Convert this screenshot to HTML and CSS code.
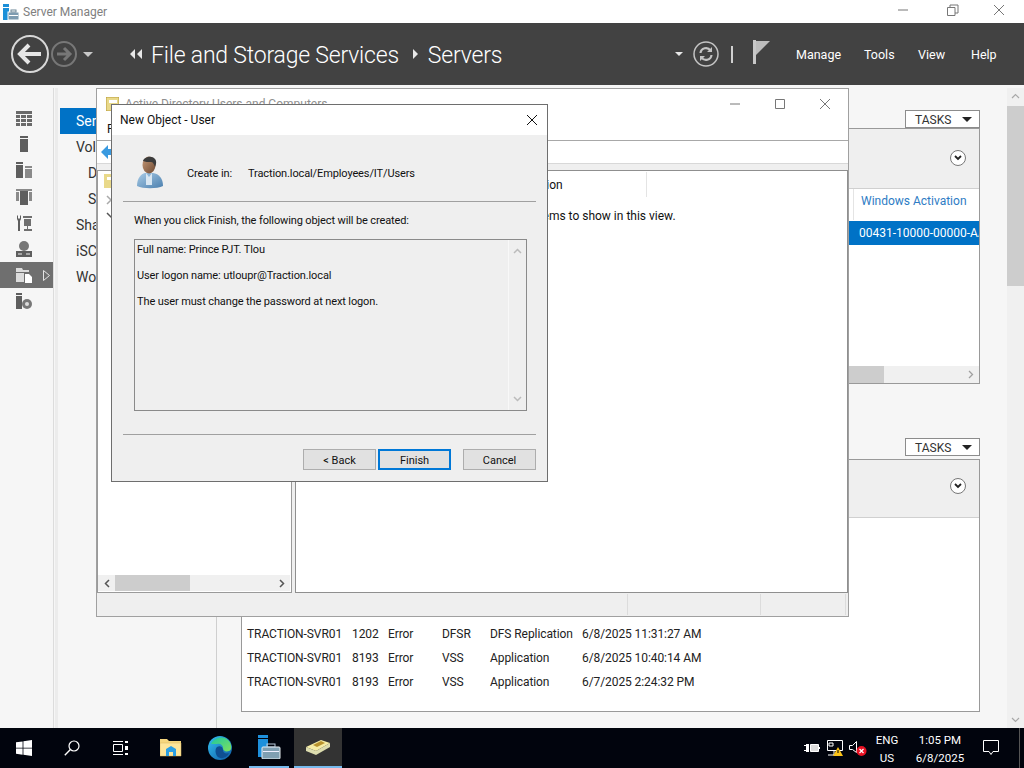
FILE: index.html
```html
<!DOCTYPE html>
<html lang="en">
<head>
    <meta charset="UTF-8">
    <title>Server Manager</title>
    <link rel="stylesheet" href="styles.css">
</head>
<body>

    <div class="app-title">
        <svg class="app-icon" width="16" height="16" viewBox="0 0 16 16">
            <rect x="0" y="0" width="6" height="3" fill="#1b8fd8"/>
            <rect x="0" y="4" width="6" height="12" fill="#1b8fd8"/>
            <rect x="5" y="8" width="11" height="8" fill="#7d9bb0" stroke="#fff" stroke-width="1"/>
            <rect x="8" y="6" width="5" height="2" fill="none" stroke="#6b8596"/>
            <rect x="6" y="11" width="9" height="1" fill="#fff"/>
        </svg>
        <span class="app-name">Server Manager</span>
        <div class="win-buttons">
            <svg class="win-btn-min" width="12" height="12" viewBox="0 0 12 12"><path d="M1 6h10" stroke="#777" fill="none"/></svg>
            <svg class="win-btn-restore" width="12" height="12" viewBox="0 0 12 12"><path d="M.5 3.500h7.500v8h-7.500zM3 3.500v-2.500h8v8h-3" stroke="#777" fill="none"/></svg>
            <svg class="win-btn-close" width="12" height="12" viewBox="0 0 12 12"><path d="M1 1l10 10M11 1l-10 10" stroke="#777" fill="none"/></svg>
        </div>
    </div>

    <header class="topbar">
        <svg class="nav-back" width="40" height="40" viewBox="0 0 40 40">
            <circle cx="20" cy="20" r="18" fill="none" stroke="#d8d8d8" stroke-width="2"/>
            <path d="M31 20H11M19 11l-9 9 9 9" fill="none" stroke="#e6e6e6" stroke-width="4"/>
        </svg>
        <svg class="nav-forward" width="28" height="28" viewBox="0 0 28 28">
            <circle cx="14" cy="14" r="12" fill="none" stroke="#777" stroke-width="2"/>
            <path d="M7 14h13M14 8l6 6-6 6" fill="none" stroke="#777" stroke-width="3"/>
        </svg>
        <span class="caret nav-caret"></span>
        <div class="crumbs">
            <svg width="12" height="10" viewBox="0 0 12 10"><path d="M5 0v10L0 5zM12 0v10L7 5z" fill="#e8e8e8"/></svg>
            <span class="crumb-first">File and Storage Services</span>
            <svg class="crumb-sep" width="5" height="10" viewBox="0 0 5 10"><path d="M0 0v10l5-5z" fill="#e8e8e8"/></svg>
            <span>Servers</span>
        </div>
        <span class="caret small-caret"></span>
        <svg class="refresh" width="28" height="28" viewBox="0 0 28 28">
            <circle cx="14" cy="14" r="12" fill="none" stroke="#c4c4c4" stroke-width="1.500"/>
            <path d="M8.500 13a5.500 5.500 0 0 1 10-2.500M19.500 15a5.500 5.500 0 0 1-10 2.500" fill="none" stroke="#c4c4c4" stroke-width="2.200"/>
            <path d="M20 7v5h-5zM8 21v-5h5z" fill="#c4c4c4"/>
        </svg>
        <span class="bar-sep"></span>
        <svg class="flag" width="18" height="24" viewBox="0 0 18 24">
            <rect x="0" y="0" width="3" height="24" fill="#c8c8c8"/>
            <path d="M3 1h14L3 15z" fill="#bdbdbd"/>
        </svg>
        <nav class="menu">
            <span class="menu-manage">Manage</span>
            <span class="menu-tools">Tools</span>
            <span class="menu-view">View</span>
            <span>Help</span>
        </nav>
    </header>

    <main class="main">
        <div class="rail">
            <div class="rail-item">
                <svg width="16" height="15" viewBox="0 0 16 15"><path d="M0 0h16v3H0zM0 4h4v3H0zM5 4h5v3H5zM11 4h5v3h-5zM0 8h4v3H0zM5 8h5v3H5zM11 8h5v3h-5zM0 12h4v3H0zM5 12h5v3H5zM11 12h5v3h-5z" fill="#6a6a6a"/></svg>
            </div>
            <div class="rail-item">
                <svg width="8" height="16" viewBox="0 0 8 16"><path d="M0 0h8v2H0zM0 3h8v13H0z" fill="#5e5e5e"/></svg>
            </div>
            <div class="rail-item">
                <svg width="16" height="16" viewBox="0 0 16 16"><path d="M0 0h7v2H0zM0 3h7v13H0z" fill="#5e5e5e"/><path d="M9 4h7v2H9zM9 7h7v9H9z" fill="#8a8a8a"/></svg>
            </div>
            <div class="rail-item">
                <svg width="16" height="16" viewBox="0 0 16 16"><path d="M0 0h16v2H0zM0 3h3v9H0zM13 3h3v9h-3z" fill="#8a8a8a"/><path d="M4 2h8v14H4z" fill="#5e5e5e"/></svg>
            </div>
            <div class="rail-item">
                <svg width="16" height="16" viewBox="0 0 16 16"><path d="M2 0v3l1 1 1-1V0l1 1v3L4 6v10H2V6L1 4V1z" fill="#5e5e5e"/><path d="M7 1h9v2H7zM8 4h7v7H8zM11 11h1v3h-1zM8 14h8v2H8z" fill="#6f6f6f"/></svg>
            </div>
            <div class="rail-item">
                <svg width="16" height="16" viewBox="0 0 16 16"><circle cx="8" cy="5" r="5" fill="#777"/><path d="M0 10h16v6H0z" fill="#5e5e5e"/><path d="M2 12.500h4v1H2zM10 12.500h4v1h-4z" fill="#eee"/></svg>
            </div>
            <div class="rail-item rail-active">
                <svg width="16" height="16" viewBox="0 0 16 16"><path d="M0 1h6l1 2h6v2H0zM0 6h8v9H0z" fill="#dcdcdc"/><path d="M9 7h4l3 3v6H9z" fill="#fff"/></svg>
                <svg class="rail-arrow" width="7" height="11" viewBox="0 0 7 11"><path d="M.5.500v10l6-5z" fill="none" stroke="#e4e4e4"/></svg>
            </div>
            <div class="rail-item">
                <svg width="16" height="16" viewBox="0 0 16 16"><path d="M0 0h6v2H0zM0 3h6v13H0z" fill="#5e5e5e"/><circle cx="11" cy="11" r="5" fill="#777"/><circle cx="11" cy="11" r="2" fill="#ddd"/></svg>
            </div>
        </div>

        <ul class="subnav">
            <li class="subnav-active">Servers</li>
            <li>Volumes</li>
            <li class="subnav-sub">Disks</li>
            <li class="subnav-sub">Storage Pools</li>
            <li>Shares</li>
            <li>iSCSI</li>
            <li>Work Folders</li>
        </ul>

        <div class="content">
            <div class="tasks"><span>TASKS</span><span class="caret tasks-caret"></span></div>
            <section class="panel panel-servers">
                <div class="panel-head">
                    <span class="expand"><svg width="8" height="6" viewBox="0 0 8 6"><path d="M1 1l3 3 3-3" fill="none" stroke="#222" stroke-width="1.800"/></svg></span>
                </div>
                <div class="col-row"><span class="col-name">Windows Activation</span></div>
                <div class="sel-row"><span>00431-10000-00000-AA</span></div>
                <div class="panel-fill"></div>
                <div class="hscroll">
                    <span class="hscroll-thumb"></span>
                    <svg width="6" height="9" viewBox="0 0 6 9"><path d="M1 1l3.500 3.500L1 8" fill="none" stroke="#a0a0a0" stroke-width="1.300"/></svg>
                </div>
            </section>

            <div class="tasks tasks-events"><span>TASKS</span><span class="caret tasks-caret"></span></div>
            <section class="panel panel-events">
                <div class="panel-head panel-head-events">
                    <span class="expand"><svg width="8" height="6" viewBox="0 0 8 6"><path d="M1 1l3 3 3-3" fill="none" stroke="#222" stroke-width="1.800"/></svg></span>
                </div>
                <table class="events">
                    <tr><td>TRACTION-SVR01</td><td>1202</td><td>Error</td><td>DFSR</td><td>DFS Replication</td><td>6/8/2025 11:31:27 AM</td></tr>
                    <tr><td>TRACTION-SVR01</td><td>8193</td><td>Error</td><td>VSS</td><td>Application</td><td>6/8/2025 10:40:14 AM</td></tr>
                    <tr><td>TRACTION-SVR01</td><td>8193</td><td>Error</td><td>VSS</td><td>Application</td><td>6/7/2025 2:24:32 PM</td></tr>
                </table>
            </section>
        </div>

        <div class="vscroll">
            <svg class="vscroll-up" width="9" height="6" viewBox="0 0 9 6"><path d="M1 5l3.500-3.500L8 5" fill="none" stroke="#a8a8a8" stroke-width="1.200"/></svg>
            <span class="vscroll-thumb"></span>
            <svg class="vscroll-down" width="9" height="6" viewBox="0 0 9 6"><path d="M1 1l3.500 3.500L8 1" fill="none" stroke="#a8a8a8" stroke-width="1.200"/></svg>
        </div>
    </main>

    <footer class="taskbar">
        <svg class="task-start" width="16" height="16" viewBox="0 0 16 16"><path d="M0 2.300l6.600-.9v6.300H0zM7.400 1.300L16 0v7.700H7.400zM0 8.400h6.600v6.300L0 13.800zM7.400 8.400H16V16l-8.600-1.200z" fill="#fff"/></svg>
        <svg class="task-search" width="16" height="16" viewBox="0 0 16 16"><circle cx="10" cy="6" r="5" fill="none" stroke="#fff" stroke-width="1.200"/><path d="M6.400 9.600L.8 15.200" stroke="#fff" stroke-width="1.400"/></svg>
        <svg class="task-view" width="16" height="16" viewBox="0 0 16 16"><path d="M1.500 4.500h9v7h-9zM1 1.500h10M1 14.500h10" fill="none" stroke="#fff"/><path d="M13 1h3v2h-3zM13 6h3v4h-3zM13 13h3v2h-3z" fill="#fff"/></svg>
        <svg class="task-explorer" width="22" height="20" viewBox="0 0 22 20">
            <path d="M0 1h7l2 2h12v15H0z" fill="#f5d67e"/>
            <path d="M0 5h21v13H0z" fill="#fde59a" stroke="#d9b75e" stroke-width=".5"/>
            <path d="M6 11l5-3 5 3v7h-3v-4H9v4H6z" fill="#2b9fe3"/>
        </svg>
        <svg class="task-edge" width="24" height="24" viewBox="0 0 24 24">
            <defs>
                <linearGradient id="edgeA" x1="0" y1="0" x2="1" y2="1"><stop offset="0" stop-color="#35c1f1"/><stop offset="1" stop-color="#0c59a4"/></linearGradient>
                <linearGradient id="edgeB" x1="0" y1="0" x2="1" y2="1"><stop offset="0" stop-color="#1dc8a0"/><stop offset="1" stop-color="#7fe05e"/></linearGradient>
            </defs>
            <circle cx="12" cy="12" r="12" fill="url(#edgeA)"/>
            <path d="M3 8C6 1 16-1 21 5c3 4 3 9 0 10-3 1-6 0-6-3 0-3-3-5-6-4-3 0-5 0-6 0z" fill="url(#edgeB)"/>
            <path d="M9 11c3-2 6 0 6 3 0 3 3 4 6 3-2 5-9 7-12 3-2-3-2-7 0-9z" fill="#0f4f92"/>
        </svg>
        <div class="task-slot task-slot-sm">
            <svg width="24" height="24" viewBox="0 0 24 24">
                <path d="M1 0h10v3H1zM1 4h10v18H1z" fill="#1e90dc"/>
                <rect x="5" y="12" width="18" height="12" rx="1" fill="#7f9fb2" stroke="#e8eef2" stroke-width="1"/>
                <rect x="10" y="9" width="8" height="3" fill="none" stroke="#bcd" stroke-width="1"/>
                <rect x="6" y="16" width="16" height="1" fill="#eef"/>
            </svg>
        </div>
        <div class="task-slot task-slot-active">
            <svg width="24" height="17" viewBox="0 0 24 17">
                <path d="M0 8l15-7 9 3-14 8z" fill="#f6eda6"/>
                <path d="M7 6l8-4 4 2-8 4z" fill="#b8932f"/>
                <path d="M0 8l10 4v4L0 12zM10 12l14-8v4L10 16z" fill="#dcdcae"/>
            </svg>
        </div>

        <div class="tray">
            <svg class="tray-power" width="16" height="12" viewBox="0 0 16 12"><path d="M6.500 2.500h8v7h-8z" fill="#ddd" stroke="#fff"/><path d="M15 5h1v2h-1zM0 3h2v1H0zM0 8h2v1H0zM2 2h3v8H2z" fill="#fff"/></svg>
            <svg class="tray-net" width="16" height="16" viewBox="0 0 16 16"><path d="M.5.500h15v10h-15zM7 11v4M1 15h7" fill="none" stroke="#fff"/><path d="M2 3h4v3H2z" fill="none" stroke="#fff"/><path d="M11 7l5 9H6z" fill="#fcc419"/><path d="M11 10v3" stroke="#000"/></svg>
            <svg class="tray-sound" width="18" height="16" viewBox="0 0 18 16"><path d="M.5 5.500h3l4-4v11l-4-3h-3z" fill="none" stroke="#fff"/><circle cx="12.500" cy="11" r="5" fill="#e81123"/><path d="M10.500 9l4 4M14.500 9l-4 4" stroke="#fff" stroke-width="1.200"/></svg>
            <div class="tray-lang"><span>ENG</span><span>US</span></div>
            <div class="tray-clock"><span>1:05 PM</span><span>6/8/2025</span></div>
            <svg class="tray-note" width="16" height="16" viewBox="0 0 16 16"><path d="M.5.500h15v11H10l-2 3-2-3H.5z" fill="none" stroke="#fff"/></svg>
            <span class="tray-peek"></span>
        </div>
    </footer>

    <div class="win-aduc">
        <div class="aduc-title">
            <svg width="13" height="14" viewBox="0 0 13 14"><path d="M0 0h13v14H0z" fill="#e9d98a"/><path d="M0 0h13v14H0z" fill="none" stroke="#b89c3c"/><path d="M3 3h8v3H3z" fill="#fff"/></svg>
            <span class="aduc-name">Active Directory Users and Computers</span>
            <div class="aduc-buttons">
                <svg width="12" height="12" viewBox="0 0 12 12"><path d="M1 6h10" stroke="#777" fill="none"/></svg>
                <svg width="12" height="12" viewBox="0 0 12 12"><path d="M1.500 1.500h9v9h-9z" stroke="#777" fill="none"/></svg>
                <svg width="12" height="12" viewBox="0 0 12 12"><path d="M1 1l10 10M11 1l-10 10" stroke="#777" fill="none"/></svg>
            </div>
        </div>
        <div class="aduc-menu">File</div>
        <div class="aduc-toolbar">
            <svg width="14" height="14" viewBox="0 0 14 14"><path d="M7 0v4h7v6H7v4L0 7z" fill="#3a9ae0"/></svg>
        </div>
        <div class="aduc-band"></div>
        <div class="aduc-panes">
            <div class="tree">
                <div class="tree-body">
                    <svg class="tree-root" width="15" height="14" viewBox="0 0 15 14"><path d="M0 0h15v14H0z" fill="#e9d98a"/><path d="M3 3h9v3H3z" fill="#fff"/></svg>
                    <svg class="tree-chev" width="7" height="10" viewBox="0 0 7 10"><path d="M1 1l4 4-4 4" fill="none" stroke="#aaa" stroke-width="1.500"/></svg>
                    <svg class="tree-chev" width="10" height="7" viewBox="0 0 10 7"><path d="M1 1l4 4 4-4" fill="none" stroke="#555" stroke-width="1.500"/></svg>
                </div>
                <div class="tree-scroll">
                    <svg width="6" height="9" viewBox="0 0 6 9"><path d="M5 1L1.500 4.500 5 8" fill="none" stroke="#555" stroke-width="1.500"/></svg>
                    <span class="tree-thumb"></span>
                    <svg class="tree-next" width="6" height="9" viewBox="0 0 6 9"><path d="M1 1l3.500 3.500L1 8" fill="none" stroke="#555" stroke-width="1.500"/></svg>
                </div>
            </div>
            <div class="list">
                <div class="list-head"><span class="list-col">Description</span></div>
                <div class="list-empty">There are no items to show in this view.</div>
            </div>
        </div>
        <div class="aduc-status"><span class="status-a"></span><span class="status-b"></span><span class="status-c"></span></div>
    </div>

    <div class="dialog">
        <div class="dialog-title">
            <span>New Object - User</span>
            <svg width="12" height="12" viewBox="0 0 12 12"><path d="M1 1l10 10M11 1l-10 10" stroke="#111" fill="none"/></svg>
        </div>
        <div class="dialog-body">
            <div class="create-row">
                <svg class="user-icon" width="28" height="33" viewBox="0 0 28 33">
                    <defs>
                        <linearGradient id="skin" x1="0" y1="0" x2="1" y2="1"><stop offset="0" stop-color="#c79a78"/><stop offset="1" stop-color="#6e4a33"/></linearGradient>
                        <linearGradient id="shirt" x1="0" y1="0" x2="1" y2="1"><stop offset="0" stop-color="#a8cbe6"/><stop offset="1" stop-color="#4b7fae"/></linearGradient>
                    </defs>
                    <path d="M1 30c0-8 4-12 8-13l8 0c6 1 10 5 10 13-6 3-20 3-26 0z" fill="url(#shirt)"/>
                    <path d="M10 17l3 4 3-4v12h-6z" fill="#d9e7f2"/>
                    <ellipse cx="13" cy="9" rx="6.500" ry="8.500" fill="url(#skin)"/>
                    <path d="M7 5c1-4 9-6 12-2 2 2 1 6 0 8-1-3-2-5-4-5-3 0-6 0-8-1z" fill="#3c3c3c"/>
                </svg>
                <span class="create-label">Create in:</span>
                <span>Traction.local/Employees/IT/Users</span>
            </div>
            <hr class="rule">
            <p class="summary-intro">When you click Finish, the following object will be created:</p>
            <div class="summary">
                <div class="summary-text">
                    <p>Full name: Prince PJT. Tlou</p>
                    <p>User logon name: utloupr@Traction.local</p>
                    <p>The user must change the password at next logon.</p>
                </div>
                <div class="summary-scroll">
                    <svg width="9" height="6" viewBox="0 0 9 6"><path d="M1 5l3.500-3.500L8 5" fill="none" stroke="#bbb" stroke-width="1.500"/></svg>
                    <svg width="9" height="6" viewBox="0 0 9 6"><path d="M1 1l3.500 3.500L8 1" fill="none" stroke="#bbb" stroke-width="1.500"/></svg>
                </div>
            </div>
            <hr class="rule rule-bottom">
            <div class="dialog-actions">
                <button class="btn">&lt; Back</button>
                <button class="btn btn-default">Finish</button>
                <button class="btn btn-cancel">Cancel</button>
            </div>
        </div>
    </div>

</body>
</html>
```

FILE: styles.css
```css
* {
    box-sizing: border-box;
}

html, body {
    height: 100%;
}

body {
    margin: 0;
    display: flex;
    flex-direction: column;
    width: 1024px;
    height: 768px;
    overflow: hidden;
    position: relative;
    background-color: #f6f6f6;
    color: #111;
    font-family: Roboto, "Liberation Sans", sans-serif;
    font-size: 12px;
}

svg {
    display: block;
    flex: none;
}

/* window title */

.app-title {
    height: 23px;
    background-color: white;
    display: flex;
    align-items: center;
    padding-left: 3px;
}

.app-name {
    margin-left: 4px;
    color: #808080;
}

.win-buttons {
    margin-left: auto;
    display: flex;
    align-items: center;
    padding-right: 19px;
    margin-top: -3px;
}

.win-btn-restore {
    margin-left: 38px;
}

.win-btn-close {
    margin-left: 34px;
}

/* dark bar */

.topbar {
    height: 62px;
    background-color: #424242;
    color: white;
    display: flex;
    align-items: center;
    padding-left: 10px;
    margin-bottom: 3px;
}

.caret {
    width: 0;
    height: 0;
    border-left: 5px solid transparent;
    border-right: 5px solid transparent;
    border-top: 5px solid #c8c8c8;
}

.nav-caret {
    margin-left: 5px;
}

.crumbs {
    display: flex;
    align-items: center;
    margin-left: 37px;
    font-size: 23px;
    font-weight: 300;
    letter-spacing: -0.2px;
    width: 544px;
    line-height: 30px;
    padding-top: 3px;
}

.crumbs svg {
    margin-top: -3px;
}

.crumb-first {
    margin-left: 9px;
}

.crumb-sep {
    margin: 0 10px 0 14px;
}

.small-caret {
    border-left-width: 4px;
    border-right-width: 4px;
    border-top: 4px solid #e8e8e8;
    margin-left: 1px;
}

.refresh {
    margin-left: 9px;
}

.bar-sep {
    width: 2px;
    height: 17px;
    background-color: #d0d0d0;
    margin-left: 11px;
}

.flag {
    margin-left: 20px;
    margin-top: -4px;
}

.menu {
    display: flex;
    margin-left: 25px;
    font-size: 12.500px;
}

.menu-manage {
    width: 68px;
}

.menu-tools {
    width: 54px;
}

.menu-view {
    width: 53px;
}

/* main area */

.main {
    flex: 1;
    display: flex;
    min-height: 0;
}

.rail {
    width: 54px;
    padding-top: 17px;
    display: flex;
    flex-direction: column;
    border-right: 1px solid #dcdcdc;
}

.rail-item {
    height: 26.200px;
    display: flex;
    align-items: center;
    justify-content: center;
    padding-right: 6px;
    position: relative;
}

.rail-active {
    background-color: #6f6f6f;
}

.rail-arrow {
    position: absolute;
    left: 43px;
    top: 8px;
}

.subnav {
    width: 162px;
    margin: 0 0 0 1px;
    list-style: none;
    padding: 20px 0 0 2px;
    border-left: 3px solid #ececec;
    border-right: 1px solid #cfcfcf;
    font-size: 14px;
    color: #333;
}

.subnav li {
    height: 26px;
    line-height: 27px;
    padding-left: 16px;
    white-space: nowrap;
}

.subnav .subnav-active {
    background-color: #0072c6;
    color: white;
}

.subnav .subnav-sub {
    padding-left: 28px;
}

.content {
    width: 790px;
    padding: 22px 0 0 24px;
}

.tasks {
    width: 75px;
    height: 18px;
    margin-left: 664px;
    border: 1px solid #8c8c8c;
    background-color: white;
    display: flex;
    align-items: center;
    padding: 1px 0 0 9px;
    color: #333;
}

.tasks-caret {
    border-left-width: 5px;
    border-right-width: 5px;
    border-top-color: #222;
    margin-left: auto;
    margin-right: 7px;
}

.tasks-events {
    margin-top: 54px;
}

.panel {
    width: 739px;
    border: 1px solid #999;
    background-color: white;
    display: flex;
    flex-direction: column;
}

.panel-servers {
    height: 256px;
}

.panel-events {
    margin-top: 3px;
    height: 253px;
}

.panel-head {
    height: 60px;
    background-color: #efefef;
    border-bottom: 1px solid #d0d0d0;
    display: flex;
    align-items: center;
    justify-content: flex-end;
    padding: 0 13px 2px 0;
}

.panel-head-events {
    height: 58px;
    padding-bottom: 6px;
}

.expand {
    width: 16px;
    height: 16px;
    border: 1px solid #777;
    border-radius: 50%;
    background-color: white;
    display: flex;
    align-items: center;
    justify-content: center;
}

.col-row {
    height: 32px;
    display: flex;
    padding-bottom: 1px;
}

.col-name {
    margin-left: 611px;
    padding: 5px 0 0 7px;
    line-height: 14px;
    color: #2e7cc4;
    border-left: 1px solid #e4e4e4;
    white-space: nowrap;
}

.sel-row {
    height: 24px;
    line-height: 24px;
    background-color: #0072c6;
    color: white;
    padding-left: 617px;
    white-space: nowrap;
    overflow: hidden;
}

.panel-fill {
    flex: 1;
}

.hscroll {
    height: 17px;
    background-color: #f0f0f0;
    display: flex;
    align-items: center;
    justify-content: flex-end;
    padding-right: 5px;
    position: relative;
}

.hscroll-thumb {
    position: absolute;
    left: 0;
    top: 0;
    bottom: 0;
    width: 642px;
    background-color: #cdcdcd;
}

.events {
    border-collapse: collapse;
    margin: 104px 0 0 5px;
    color: #222;
    letter-spacing: -0.08px;
}

.events td {
    height: 24px;
    padding: 0;
    white-space: nowrap;
}

.events td:nth-child(1) {
    width: 105px;
}

.events td:nth-child(2) {
    width: 36px;
}

.events td:nth-child(3) {
    width: 54px;
}

.events td:nth-child(4) {
    width: 48px;
}

.events td:nth-child(5) {
    width: 92px;
}

.vscroll {
    width: 17px;
    background-color: #f0f0f0;
    display: flex;
    flex-direction: column;
    align-items: center;
}

.vscroll-up {
    margin-top: 5px;
}

.vscroll-thumb {
    width: 17px;
    height: 180px;
    background-color: #cdcdcd;
    margin-top: 7px;
}

.vscroll-down {
    margin-top: auto;
    margin-bottom: 5px;
}

/* taskbar */

.taskbar {
    height: 40px;
    background-color: #01040d;
    color: white;
    display: flex;
    align-items: center;
    padding-left: 16px;
}

.task-search {
    margin-left: 32px;
}

.task-view {
    margin-left: 32px;
}

.task-explorer {
    margin-left: 32px;
}

.task-edge {
    margin-left: 26px;
}

.task-slot {
    width: 40px;
    height: 40px;
    border-bottom: 2px solid #76b9ed;
    display: flex;
    align-items: center;
    justify-content: center;
}

.task-slot-sm {
    margin-left: 17px;
}

.task-slot-active {
    width: 48px;
    margin-left: 5px;
    background-color: #333;
}

.tray {
    margin-left: auto;
    display: flex;
    align-items: center;
    height: 40px;
}

.tray-power {
    margin-right: 7px;
}

.tray-net {
    margin-right: 6px;
}

.tray-lang,
.tray-clock {
    display: flex;
    flex-direction: column;
    align-items: center;
    line-height: 18px;
    padding-top: 2px;
    font-size: 11.500px;
}

.tray-lang {
    margin-left: 6px;
    width: 28px;
}

.tray-clock {
    margin-left: 8px;
    width: 62px;
}

.tray-note {
    margin-left: 12px;
}

.tray-peek {
    width: 1px;
    height: 40px;
    background-color: #555;
    margin-left: 20px;
    margin-right: 4px;
}

/* Active Directory window */

.win-aduc {
    position: absolute;
    left: 96px;
    top: 88px;
    width: 753px;
    height: 529px;
    background-color: white;
    border: 1px solid #a0a0a0;
    display: flex;
    flex-direction: column;
}

.aduc-title {
    height: 29px;
    display: flex;
    align-items: center;
    padding-left: 9px;
    color: #909090;
}

.aduc-name {
    margin-left: 6px;
}

.aduc-buttons {
    margin-left: auto;
    display: flex;
    gap: 33px;
    padding-right: 17px;
}

.aduc-menu {
    height: 23px;
    padding-left: 10px;
    line-height: 23px;
    border-bottom: 1px solid #a8a8a8;
}

.aduc-toolbar {
    height: 23px;
    padding: 4px 0 0 4px;
    border-bottom: 1px solid #d8d8d8;
}

.aduc-band {
    height: 6px;
    background-color: #efefef;
}

.aduc-panes {
    flex: 1;
    display: flex;
    gap: 3px;
    background-color: #efefef;
    min-height: 0;
}

.tree {
    width: 195px;
    background-color: white;
    border: 1px solid #9a9a9a;
    display: flex;
    flex-direction: column;
}

.tree-body {
    flex: 1;
    padding: 3px 0 0 6px;
    overflow: hidden;
}

.tree-chev {
    margin: 7px 0 0 2px;
}

.tree-scroll {
    height: 16px;
    background-color: #f0f0f0;
    display: flex;
    align-items: center;
    padding-left: 6px;
    margin: 0 1px 1px 0;
    position: relative;
}

.tree-thumb {
    position: absolute;
    left: 17px;
    top: 0;
    bottom: 0;
    width: 75px;
    background-color: #cdcdcd;
}

.tree-next {
    margin-left: auto;
    margin-right: 5px;
}

.list {
    flex: 1;
    background-color: white;
    border: 1px solid #8f8f8f;
}

.list-head {
    height: 25px;
    padding-left: 206px;
    line-height: 27px;
    margin-top: 1px;
    width: 351px;
    border-right: 1px solid #e4e4e4;
    white-space: nowrap;
}

.list-empty {
    padding-left: 170px;
    margin-top: 9px;
    line-height: 20px;
    white-space: nowrap;
}

.aduc-status {
    height: 23px;
    background-color: #efefef;
    position: relative;
}

.aduc-status span {
    position: absolute;
    top: 1px;
    bottom: 1px;
    width: 1px;
    background-color: #dcdcdc;
}

.status-a {
    left: 530px;
}

.status-b {
    left: 663px;
}

.status-c {
    left: 748px;
}

/* New Object dialog */

.dialog {
    position: absolute;
    left: 111px;
    top: 104px;
    width: 437px;
    height: 378px;
    background-color: #efefef;
    border: 1px solid #6e6e6e;
    display: flex;
    flex-direction: column;
    font-size: 11px;
}

.dialog-title {
    height: 30px;
    background-color: white;
    display: flex;
    align-items: center;
    justify-content: space-between;
    padding: 0 9px 0 8px;
    font-size: 12px;
}

.dialog-body {
    flex: 1;
    padding: 0 11px;
    letter-spacing: -0.12px;
}

.create-row {
    height: 66px;
    display: flex;
    align-items: center;
    padding: 10px 0 0 13px;
}

.user-icon {
    margin: -2px 23px 0 0;
}

.create-label {
    width: 61px;
}

.rule {
    margin: 0;
    border: 0;
    border-top: 1px solid #a0a0a0;
}

.summary-intro {
    margin: 11px 0 0 11px;
    line-height: 16px;
}

.summary {
    margin: 10px 9px 0 11px;
    height: 172px;
    border: 1px solid #8a8a8a;
    display: flex;
}

.summary-text {
    flex: 1;
    padding: 1px 2px 0;
}

.summary-text p {
    margin: 0;
    height: 26px;
    line-height: 18px;
}

.summary-scroll {
    width: 18px;
    border-left: 1px solid #f8f8f8;
    display: flex;
    flex-direction: column;
    align-items: center;
    justify-content: space-between;
    padding: 8px 0;
}

.rule-bottom {
    margin-top: 23px;
}

.dialog-actions {
    display: flex;
    justify-content: flex-end;
    margin-top: 14px;
}

.btn {
    width: 73px;
    height: 21px;
    padding: 1px 0 0;
    margin-left: 2px;
    background-color: #e1e1e1;
    border: 1px solid #adadad;
    font: inherit;
    color: #111;
}

.btn-default {
    border: 2px solid #0078d7;
}

.btn-cancel {
    margin-left: 12px;
}
```
